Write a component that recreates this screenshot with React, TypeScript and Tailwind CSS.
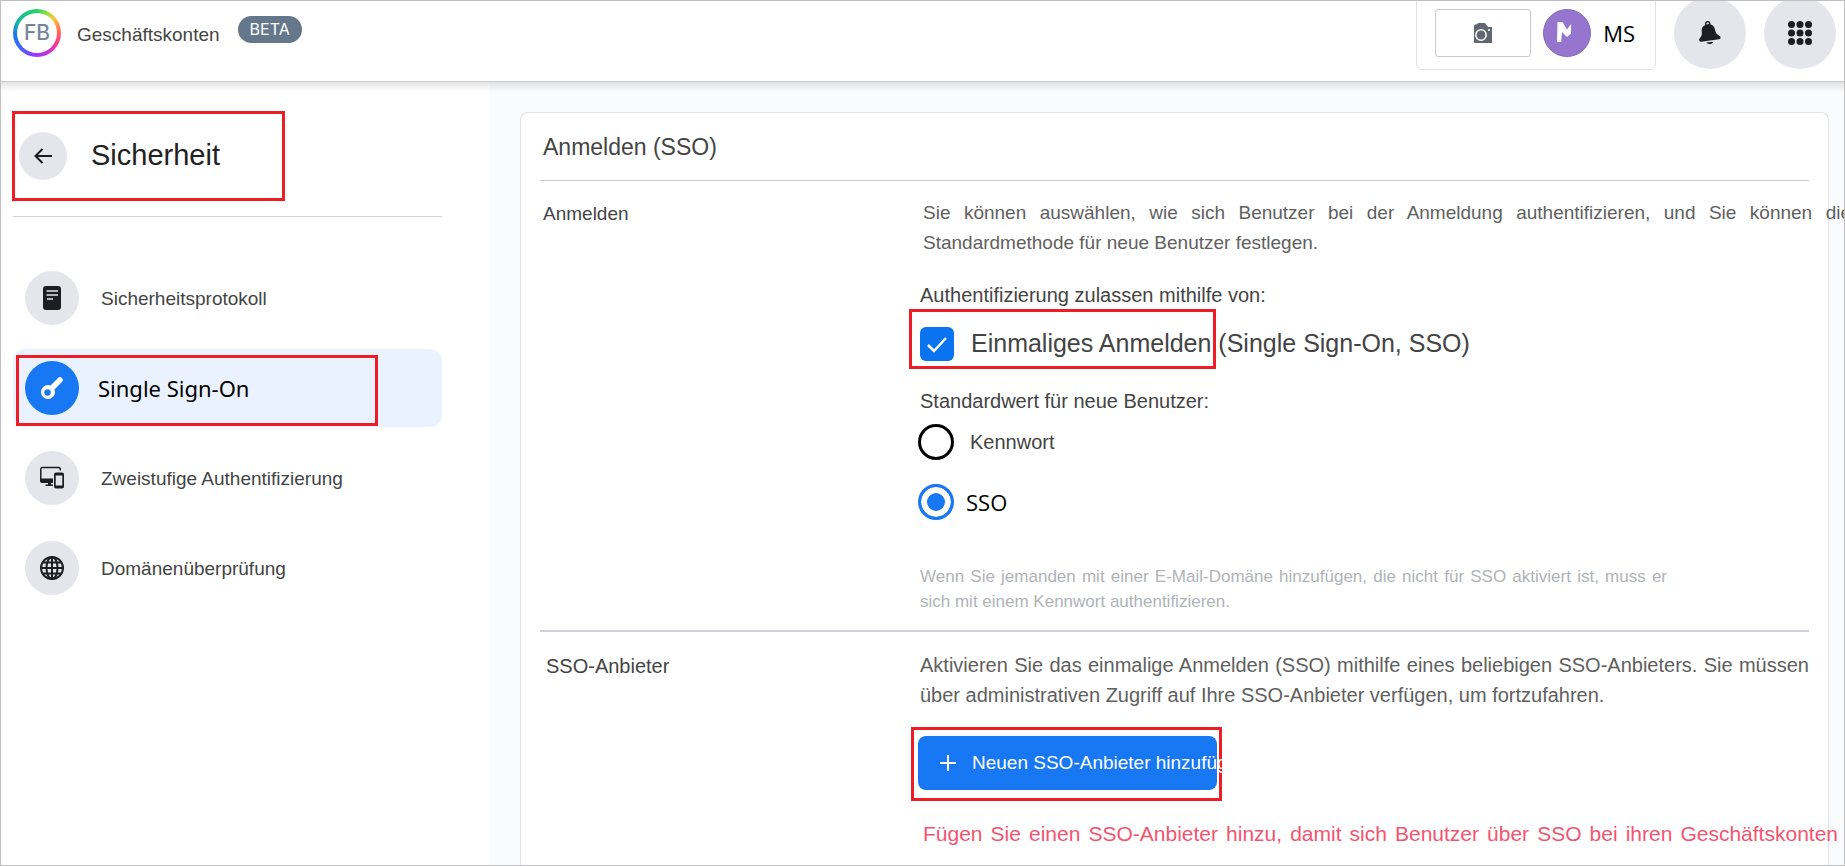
import type { ReactNode } from "react";

function Highlight({ className }: { className: string }) {
  return <span aria-hidden="true" className={`pointer-events-none absolute border-[3px] border-[#ee1c25] ${className}`} />;
}

function NoteIcon() {
  return (
    <svg width="18" height="24" viewBox="0 0 18 24">
      <rect width="18" height="24" rx="3" fill="#1c1e21" />
      <path d="M3.500 5h11.500M3.500 9h11.500M4 13h6" stroke="#e4e6eb" strokeWidth="1.500" />
    </svg>
  );
}

function KeyIcon() {
  return (
    <svg width="24" height="24" viewBox="0 0 24 24">
      <path d="M10 14 20 4" stroke="#fff" strokeWidth="5.500" strokeLinecap="round" />
      <circle cx="8" cy="16" r="7" fill="#fff" />
      <circle cx="7.500" cy="16.500" r="3.200" fill="#1877f2" />
    </svg>
  );
}

function DevicesIcon() {
  return (
    <svg width="24" height="24" viewBox="0 0 24 24">
      <path d="M20.200 4.500V3a1.500 1.500 0 0 0-1.500-1.500H2.500A1.700 1.700 0 0 0 .8 3v11" fill="none" stroke="#1c1e21" strokeWidth="1.500" />
      <path d="M0 12.500h13V17H2a2 2 0 0 1-2-2zM8 17h3v1.500h2V20H5.500v-1.500H8z" fill="#1c1e21" />
      <path fillRule="evenodd" d="M16 6.500h6a2 2 0 0 1 2 2v12a2 2 0 0 1-2 2h-6a2 2 0 0 1-2-2v-12a2 2 0 0 1 2-2zm-.3 3v10h6.600v-10z" fill="#1c1e21" />
    </svg>
  );
}

function GlobeIcon() {
  return (
    <svg width="24" height="24" viewBox="0 0 24 24" fill="none" stroke="#1c1e21" strokeWidth="2">
      <circle cx="12" cy="12" r="11" />
      <ellipse cx="12" cy="12" rx="5.500" ry="11" />
      <path d="M12 1v22M1 12h22M3 6.500h18M3 17.500h18" />
    </svg>
  );
}

function Item({ icon, label, active }: { icon: ReactNode; label: string; active?: boolean }) {
  return (
    <li>
      <a
        href="#"
        aria-current={active ? "page" : undefined}
        className={`relative flex h-[78px] items-center rounded-xl pl-3 ${active ? "gap-[19px] bg-[#eaf2ff]" : "gap-[22px]"}`}
      >
        <span className={`flex size-[54px] items-center justify-center rounded-full ${active ? "bg-[#1877f2]" : "bg-[#e4e6eb]"}`}>{icon}</span>
        <span className={active ? "font-['Noto_Sans',sans-serif] text-[22px] text-black" : "pt-0.5 text-[19px] text-[#444]"}>{label}</span>
        {active && <Highlight className="top-1.5 bottom-px left-[3px] w-[362px]" />}
      </a>
    </li>
  );
}

function Header() {
  return (
    <header className="relative z-10 overflow-hidden border-b border-[#c8cacd] bg-white pb-4">
      <div className="flex h-16 items-center justify-between pr-2 pl-3">
        <div className="flex items-center">
          <div className="rounded-full bg-[conic-gradient(#25d366,#a4dc3a_30deg,#ffc53a_50deg,#ff6b57_85deg,#f53b8e_120deg,#c335dc_150deg,#9a36ff_185deg,#3a68ff_230deg,#1877f2_265deg,#18b8a0_300deg,#25d366)] p-1">
            <div className="flex size-10 items-center justify-center rounded-full bg-white font-['Inter',sans-serif] text-[21px] font-medium text-[#75869a]">
              FB
            </div>
          </div>
          <span className="mt-1 ml-4 text-[19px] text-[#444]">Geschäftskonten</span>
          <span className="mb-2 ml-[18px] flex h-[27px] items-center rounded-full bg-[#65778b] px-3 font-['Inter',sans-serif] text-[16px] text-white">
            BETA
          </span>
        </div>
        <div className="flex items-center gap-[18px]">
          <div className="mb-1 flex h-[78px] items-center gap-3 rounded-b-md border border-[#e1e3e7] pt-1 pr-5 pl-[18px]">
            <button type="button" aria-label="Kamera" className="flex h-12 w-24 items-center justify-center rounded-[3px] border border-[#c8cacd]">
              <svg width="18" height="20" viewBox="0 0 18 20">
                <path d="M0 3q0-1 1-1.500h1.500Q3 0 5 0h5q2 0 2.500 2L14 4h4v16H0z" fill="#606770" />
                <circle cx="7" cy="12" r="5.200" fill="none" stroke="#fff" strokeWidth="1.500" />
                <circle cx="15" cy="7" r="1" fill="#fff" />
              </svg>
            </button>
            <svg width="48" height="48" viewBox="0 0 48 48" aria-hidden="true">
              <circle cx="24" cy="24" r="23.500" fill="#9575cd" stroke="#8867bd" />
              <path d="M14.500 13h5l4.500 7.500 4-5.500v9.500L24 28l-5-5-.8 10H14z" fill="#fff" />
            </svg>
            <span className="font-['Open_Sans',sans-serif] text-[22px] text-black">MS</span>
          </div>
          <button type="button" aria-label="Benachrichtigungen" className="flex size-[72px] items-center justify-center rounded-full bg-[#e4e6eb]">
            <svg width="24" height="24" viewBox="0 0 24 24">
              <g transform="rotate(-8 12 12)" fill="#1c1e21">
                <circle cx="11" cy="2.500" r="2" fill="none" stroke="#1c1e21" strokeWidth="1.500" />
                <path d="M11 3c4.500 0 6.500 3 6.500 7 0 3 1.500 4.500 4 6.500 1 1.500 0 3-1.500 3H2c-1.500 0-2-1.500-1.500-3C3 14 4 13 4 10c0-4 2-7 7-7zM7 21h7c-1 2.500-6 2.500-7 0z" />
              </g>
            </svg>
          </button>
          <button type="button" aria-label="Apps" className="flex size-[72px] items-center justify-center rounded-full bg-[#e4e6eb]">
            <svg width="24" height="24" viewBox="0 0 24 24" fill="#1c1e21">
              {[3.5, 12, 20.5].map((y) => [3.5, 12, 20.5].map((x) => <circle key={`${x}-${y}`} cx={x} cy={y} r="3.500" />))}
            </svg>
          </button>
        </div>
      </div>
    </header>
  );
}

function Sidebar() {
  return (
    <nav aria-label="Sicherheit" className="w-[489px] shrink-0 bg-white pr-12 pl-3">
      <div className="relative flex h-[135px] items-center gap-6 border-b border-[#d0d2d6] pt-3.5 pl-1.5">
        <button type="button" aria-label="Zurück" className="flex size-12 items-center justify-center rounded-full bg-[#e4e6eb]">
          <svg width="18" height="16" viewBox="0 0 18 16" fill="none" stroke="#1c1e21" strokeWidth="2">
            <path d="M18 8H2M8.500 1 1.500 8l7 7" />
          </svg>
        </button>
        <h1 className="text-[29px] text-[#222]">Sicherheit</h1>
        <Highlight className="top-[29px] -left-px h-[90px] w-[273px]" />
      </div>
      <ul className="mt-[42px] flex flex-col gap-3">
        <Item icon={<NoteIcon />} label="Sicherheitsprotokoll" />
        <Item icon={<KeyIcon />} label="Single Sign-On" active />
        <Item icon={<DevicesIcon />} label="Zweistufige Authentifizierung" />
        <Item icon={<GlobeIcon />} label="Domänenüberprüfung" />
      </ul>
    </nav>
  );
}

export default function App() {
  return (
    <div className="flex min-h-screen flex-col overflow-x-clip border border-[#bfbfbf] bg-white font-['Liberation_Sans',Arial,sans-serif]">
      <Header />
      <div className="relative flex flex-1">
        <div aria-hidden="true" className="absolute inset-x-0 top-0 h-2.5 bg-linear-to-b from-black/10 to-transparent" />
        <Sidebar />
        <main className="flex min-w-0 flex-1 bg-[#fafbfd] pt-[30px] pr-[15px] pl-[30px]">
          <section className="min-w-0 flex-1 rounded-t-lg border border-b-0 border-[#e1e3e9] bg-white px-[19px]">
            <h2 className="border-b border-[#c8cacd] px-[3px] pt-4 pb-[15px] text-[23px] leading-9 text-[#444]">Anmelden (SSO)</h2>

            <div className="grid grid-cols-[380px_minmax(0,1fr)] border-b-2 border-[#d0d0d6] pt-[17px] pb-4">
              <h3 className="pl-[3px] text-[19px] leading-8 text-[#444]">Anmelden</h3>
              <div>
                <p className="-mr-[42px] pl-[3px] text-justify text-[19px] leading-[30px] text-[#606060]">
                  Sie können auswählen, wie sich Benutzer bei der Anmeldung authentifizieren, und Sie können die Standardmethode für neue Benutzer festlegen.
                </p>
                <p className="mt-[22px] text-[20px] leading-[30px] text-[#444]">Authentifizierung zulassen mithilfe von:</p>
                <div className="relative mt-2 flex h-[52px] items-center">
                  <label className="flex items-center gap-[17px] text-[25px] text-[#444]">
                    <span className="relative flex">
                      <input type="checkbox" defaultChecked className="size-[34px] appearance-none rounded-md bg-[#0a73f0]" />
                      <svg className="pointer-events-none absolute inset-0" width="34" height="34" viewBox="0 0 34 34" fill="none" stroke="#fff" strokeWidth="2.500">
                        <path d="m8 18 6 6 12-13" />
                      </svg>
                    </span>
                    Einmaliges Anmelden (Single Sign-On, SSO)
                  </label>
                  <Highlight className="-top-[9px] -left-[11px] h-[60px] w-[307px]" />
                </div>
                <fieldset className="mt-4">
                  <legend className="text-[20px] leading-[30px] text-[#444]">Standardwert für neue Benutzer:</legend>
                  <label className="mt-2 flex h-9 items-center gap-4 text-[20px] text-[#444]">
                    <input type="radio" name="default" className="-ml-0.5 size-9 appearance-none rounded-full border-[3px] border-black" />
                    Kennwort
                  </label>
                  <label className="mt-6 flex h-9 items-center gap-3 font-['Open_Sans',sans-serif] text-[22px] text-black">
                    <input
                      type="radio"
                      name="default"
                      defaultChecked
                      className="-ml-0.5 size-9 appearance-none rounded-full border-[3px] border-[#1877f2] bg-[#1877f2] shadow-[inset_0_0_0_6px_white]"
                    />
                    SSO
                  </label>
                </fieldset>
                <p className="mt-11 max-w-[747px] text-justify text-[17px] leading-[25px] text-[#b0b3b8]">
                  Wenn Sie jemanden mit einer E-Mail-Domäne hinzufügen, die nicht für SSO aktiviert ist, muss er sich mit einem Kennwort authentifizieren.
                </p>
              </div>
            </div>

            <div className="grid grid-cols-[380px_minmax(0,1fr)] pt-[18px]">
              <h3 className="pl-1.5 text-[20px] leading-8 text-[#444]">SSO-Anbieter</h3>
              <div>
                <p className="text-justify text-[20px] leading-[30px] text-[#606060]">
                  Aktivieren Sie das einmalige Anmelden (SSO) mithilfe eines beliebigen SSO-Anbieters. Sie müssen über administrativen Zugriff auf Ihre SSO-Anbieter verfügen, um fortzufahren.
                </p>
                <div className="relative mt-[26px] flex w-[299px]">
                  <Highlight className="-top-[9px] -left-[9px] h-[74px] w-[311px]" />
                  <button
                    type="button"
                    className="relative -ml-0.5 flex h-[54px] w-[299px] items-center gap-4 rounded-lg bg-[#1877f2] pl-[22px] text-[19px] whitespace-nowrap text-white"
                  >
                    <svg className="shrink-0" width="16" height="16" viewBox="0 0 16 16" stroke="#fff" strokeWidth="2">
                      <path d="M8 0v16M0 8h16" />
                    </svg>
                    Neuen SSO-Anbieter hinzufügen
                  </button>
                </div>
                <p className="mt-7 -mr-[29px] pl-[3px] text-justify text-[21px] leading-8 text-[#f3546f] [text-align-last:justify]">
                  Fügen Sie einen SSO-Anbieter hinzu, damit sich Benutzer über SSO bei ihren Geschäftskonten
                </p>
              </div>
            </div>
          </section>
        </main>
      </div>
    </div>
  );
}
